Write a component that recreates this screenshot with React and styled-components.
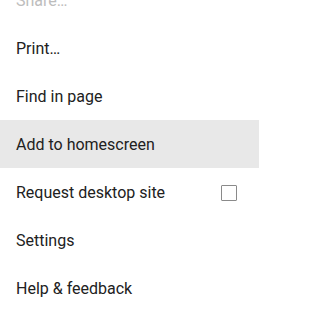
import React from 'react';
import styled, { createGlobalStyle } from 'styled-components';

const GlobalStyle = createGlobalStyle`
    html, body {
        margin: 0;
        padding: 0;
        background: #ffffff;
    }
    body {
        font-family: Roboto, "Noto Sans", sans-serif;
    }
`;

const MenuViewport = styled.div`
    width: 259px;
    height: 314px;
    overflow: hidden;
    background: #ffffff;
`;

const MenuList = styled.ul`
    list-style: none;
    margin: -24px 0 0 0;
    padding: 0;
`;

const MenuItem = styled.li`
    height: 48px;
    display: flex;
    align-items: center;
    justify-content: space-between;
    padding: 0 22px 0 16px;
    font-size: 16px;
    color: ${(props) => (props.disabled ? '#bdbdbd' : '#212121')};
    background-color: ${(props) => (props.active ? '#e8e8e8' : 'transparent')};
`;

const CheckBox = styled.span`
    width: 14px;
    height: 14px;
    border: 1.5px solid #8a8a8a;
    border-radius: 1px;
    margin-top: 1px;
`;

const items = [
    { label: 'Share…', disabled: true },
    { label: 'Print…' },
    { label: 'Find in page' },
    { label: 'Add to homescreen', active: true },
    { label: 'Request desktop site', checkbox: true },
    { label: 'Settings' },
    { label: 'Help & feedback' },
];

const App = () => {
    return (
        <>
            <GlobalStyle />
            <MenuViewport>
                <MenuList>
                    {items.map((item) => (
                        <MenuItem key={item.label} disabled={item.disabled} active={item.active}>
                            <span>{item.label}</span>
                            {item.checkbox && <CheckBox />}
                        </MenuItem>
                    ))}
                </MenuList>
            </MenuViewport>
        </>
    );
};

export default App;
